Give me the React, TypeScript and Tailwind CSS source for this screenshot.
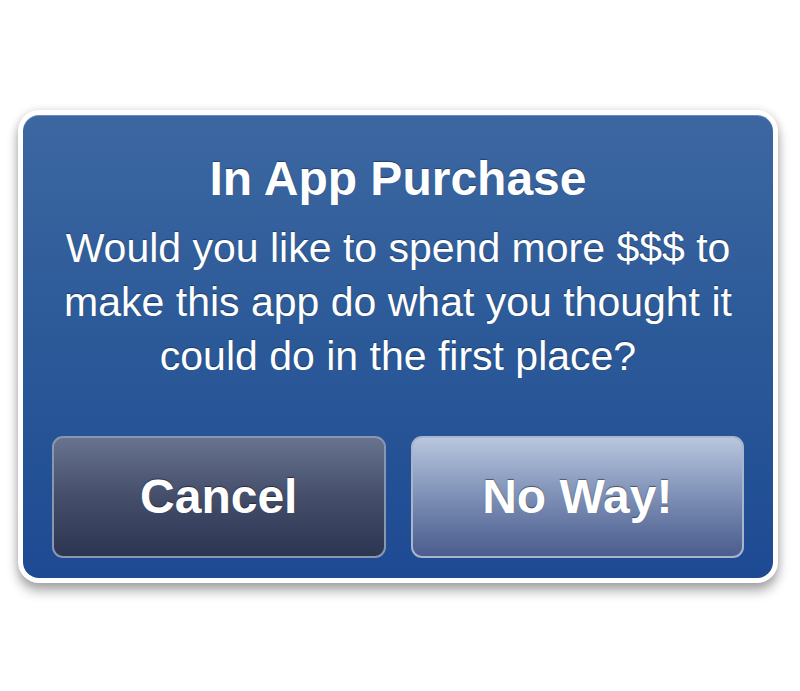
import React from 'react';

// Glossy iOS-style alert: blue sheet, white rim, two gradient buttons
const AlertButton = ({ label, variant }: { label: string; variant: 'dark' | 'light' }) => (
  <button
    className={`
      flex-1 h-[122px] rounded-[11px] border-2 flex items-center justify-center
      text-white font-bold text-[48px] leading-none
      [text-shadow:0_-1px_1px_rgba(0,0,0,0.45)]
      ${variant === 'dark'
        ? 'border-[#8b96ad] bg-gradient-to-b from-[#68738f] via-[#444e6b] to-[#2c3651]'
        : 'border-[#a8b5cd] bg-gradient-to-b from-[#b9c6de] via-[#7d8fb5] to-[#4a5d8d]'
      }
    `}
  >
    {label}
  </button>
);

export default function App() {
  return (
    <div
      className="w-[800px] h-[691px] bg-white pt-[110px] pl-[18px]"
      style={{ fontFamily: '"Liberation Sans", Arial, sans-serif' }}
    >
      {/* White rim around the alert sheet */}
      <div className="w-[760px] h-[473px] rounded-[21px] bg-white p-[5px] shadow-[0_8px_12px_rgba(0,0,0,0.33),0_0_8px_rgba(0,0,0,0.12)]">
        <div className="h-full rounded-[16px] bg-gradient-to-b from-[#3c67a1] via-[#2b5998] to-[#1d4a93] flex flex-col pt-[36px] px-[29px] pb-[20px] shadow-[inset_0_1px_0_rgba(255,255,255,0.25)]">
          <h2 className="text-white font-bold text-[48px] leading-[56px] text-center [text-shadow:0_-1px_1px_rgba(0,0,0,0.35)]">
            In App Purchase
          </h2>
          <p className="mt-[14px] text-white text-[41px] leading-[54px] text-center [text-shadow:0_-1px_1px_rgba(0,0,0,0.35)]">
            Would you like to spend more $$$ to
            <br />
            make this app do what you thought it
            <br />
            could do in the first place?
          </p>
          <div className="mt-auto flex gap-[25px]">
            <AlertButton label="Cancel" variant="dark" />
            <AlertButton label="No Way!" variant="light" />
          </div>
        </div>
      </div>
    </div>
  );
}
